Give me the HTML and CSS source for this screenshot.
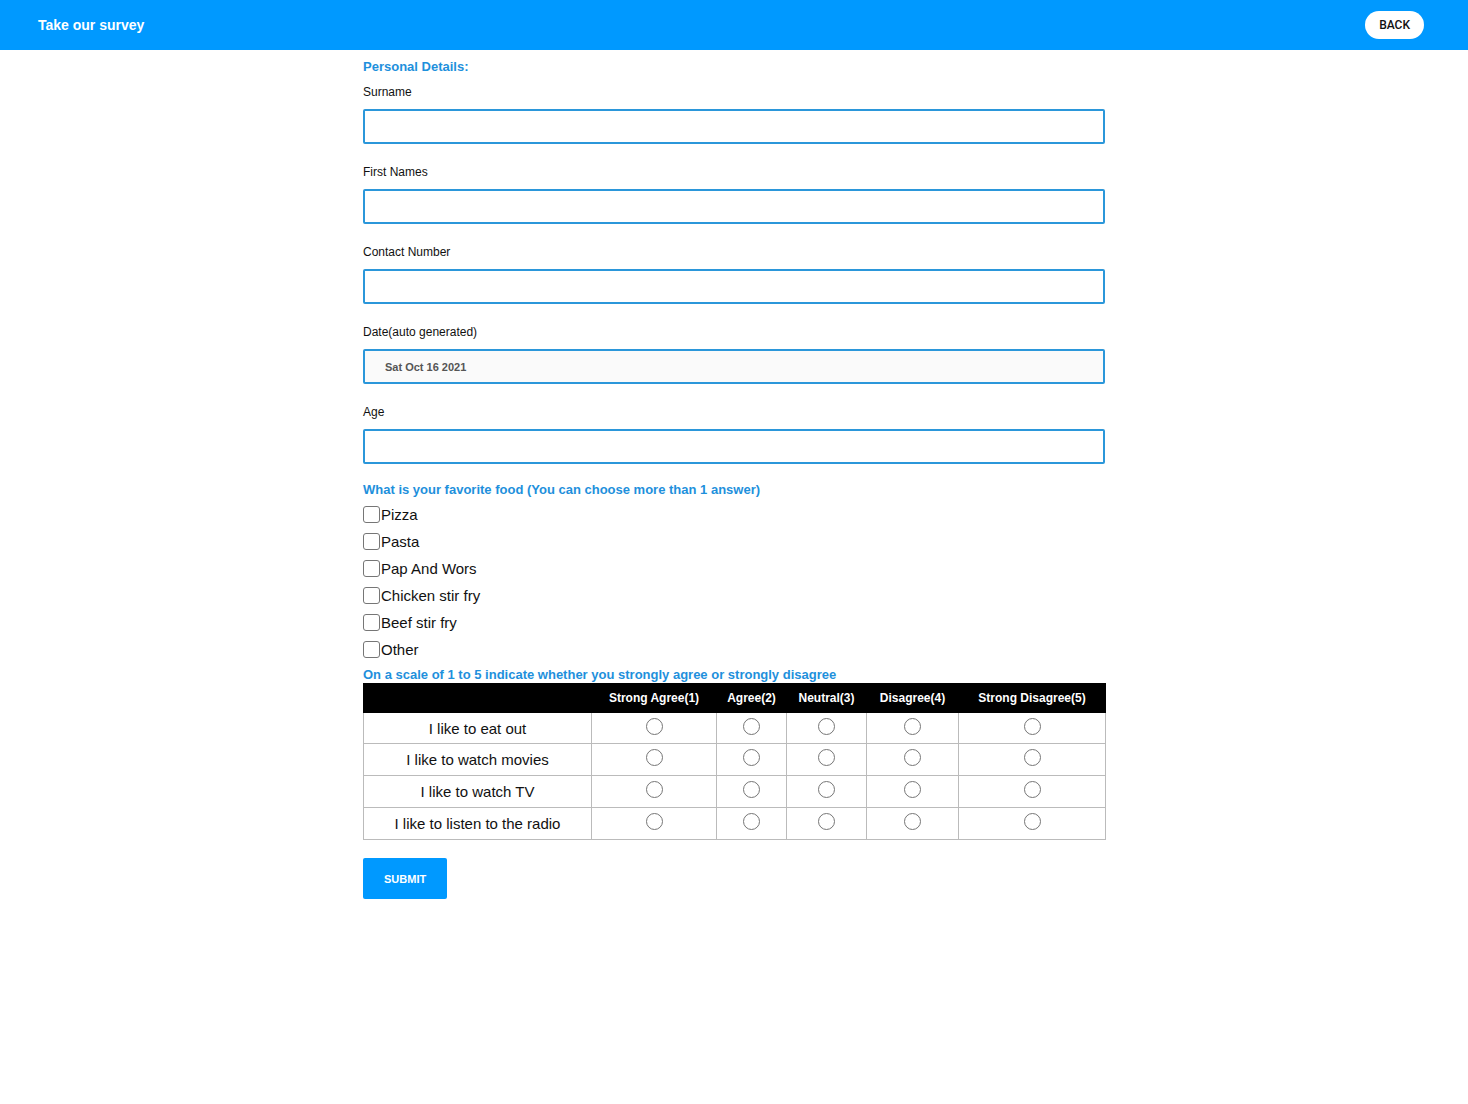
FILE: index.html
```html
<!DOCTYPE html>
<html lang="en">
<head>
<meta charset="utf-8">
<meta name="viewport" content="width=device-width, initial-scale=1">
<title>Take our survey</title>
<link rel="stylesheet" href="styles.css">
</head>
<body>
<header class="topbar">
  <h1 class="topbar-title">Take our survey</h1>
  <button class="back" type="button">BACK</button>
</header>
<main>
<form class="survey">
  <h2 class="heading">Personal Details:</h2>
  <div class="fields">
    <div class="field"><label for="surname">Surname</label><input class="text" id="surname" type="text"></div>
    <div class="field"><label for="names">First Names</label><input class="text" id="names" type="text"></div>
    <div class="field"><label for="contact">Contact Number</label><input class="text" id="contact" type="tel"></div>
    <div class="field"><label for="date">Date(auto generated)</label><input class="text" id="date" type="text" value="Sat Oct 16 2021" disabled></div>
    <div class="field"><label for="age">Age</label><input class="text" id="age" type="text"></div>
  </div>
  <h2 class="heading">What is your favorite food (You can choose more than 1 answer)</h2>
  <div class="options">
    <label class="option"><input class="mark" type="checkbox" name="food" value="pizza">Pizza</label>
    <label class="option"><input class="mark" type="checkbox" name="food" value="pasta">Pasta</label>
    <label class="option"><input class="mark" type="checkbox" name="food" value="pap">Pap And Wors</label>
    <label class="option"><input class="mark" type="checkbox" name="food" value="chicken">Chicken stir fry</label>
    <label class="option"><input class="mark" type="checkbox" name="food" value="beef">Beef stir fry</label>
    <label class="option"><input class="mark" type="checkbox" name="food" value="other">Other</label>
  </div>
  <h2 class="heading" id="scale">On a scale of 1 to 5 indicate whether you strongly agree or strongly disagree</h2>
  <table class="ratings" aria-labelledby="scale">
    <colgroup><col class="c-topic"><col class="c-1"><col class="c-2"><col class="c-3"><col class="c-4"><col class="c-5"></colgroup>
    <thead>
      <tr><td></td><th scope="col">Strong Agree(1)</th><th scope="col">Agree(2)</th><th scope="col">Neutral(3)</th><th scope="col">Disagree(4)</th><th scope="col">Strong Disagree(5)</th></tr>
    </thead>
    <tbody>
      <tr><th scope="row">I like to eat out</th>
        <td><input class="mark round" type="radio" name="eat" value="1" aria-label="Eat out: strong agree"></td>
        <td><input class="mark round" type="radio" name="eat" value="2" aria-label="Eat out: agree"></td>
        <td><input class="mark round" type="radio" name="eat" value="3" aria-label="Eat out: neutral"></td>
        <td><input class="mark round" type="radio" name="eat" value="4" aria-label="Eat out: disagree"></td>
        <td><input class="mark round" type="radio" name="eat" value="5" aria-label="Eat out: strong disagree"></td></tr>
      <tr><th scope="row">I like to watch movies</th>
        <td><input class="mark round" type="radio" name="movies" value="1" aria-label="Movies: strong agree"></td>
        <td><input class="mark round" type="radio" name="movies" value="2" aria-label="Movies: agree"></td>
        <td><input class="mark round" type="radio" name="movies" value="3" aria-label="Movies: neutral"></td>
        <td><input class="mark round" type="radio" name="movies" value="4" aria-label="Movies: disagree"></td>
        <td><input class="mark round" type="radio" name="movies" value="5" aria-label="Movies: strong disagree"></td></tr>
      <tr><th scope="row">I like to watch TV</th>
        <td><input class="mark round" type="radio" name="tv" value="1" aria-label="TV: strong agree"></td>
        <td><input class="mark round" type="radio" name="tv" value="2" aria-label="TV: agree"></td>
        <td><input class="mark round" type="radio" name="tv" value="3" aria-label="TV: neutral"></td>
        <td><input class="mark round" type="radio" name="tv" value="4" aria-label="TV: disagree"></td>
        <td><input class="mark round" type="radio" name="tv" value="5" aria-label="TV: strong disagree"></td></tr>
      <tr><th scope="row">I like to listen to the radio</th>
        <td><input class="mark round" type="radio" name="radio" value="1" aria-label="Radio: strong agree"></td>
        <td><input class="mark round" type="radio" name="radio" value="2" aria-label="Radio: agree"></td>
        <td><input class="mark round" type="radio" name="radio" value="3" aria-label="Radio: neutral"></td>
        <td><input class="mark round" type="radio" name="radio" value="4" aria-label="Radio: disagree"></td>
        <td><input class="mark round" type="radio" name="radio" value="5" aria-label="Radio: strong disagree"></td></tr>
    </tbody>
  </table>
  <button class="submit" type="submit">SUBMIT</button>
</form>
</main>
</body>
</html>
```
FILE: styles.css
```css
*, *::before, *::after { box-sizing: border-box; }

body {
  margin: 0;
  background: #fff;
  color: #111;
  font-family: "Liberation Sans", Arial, sans-serif;
  font-size: 15px;
}

input, button { font-family: inherit; }

.topbar {
  display: flex;
  align-items: center;
  justify-content: space-between;
  min-height: 50px;
  padding: 0 44px 0 38px;
  background: #09f;
}

.topbar-title {
  margin: 0;
  color: #fff;
  font-size: 14px;
  line-height: 20px;
}

.back {
  height: 28px;
  padding: 0 14px;
  border: 0;
  border-radius: 14px;
  background: #fff;
  color: #111;
  font-family: Roboto, "Liberation Sans", sans-serif;
  font-size: 12px;
  font-weight: 500;
}

.survey {
  max-width: 742px;
  margin: 0 auto;
  padding: 9px 0 24px;
}

.heading {
  margin: 0;
  color: #1e90dc;
  font-size: 13px;
  line-height: 16px;
}

.fields {
  display: grid;
  gap: 18px;
  padding: 7px 0 18px;
}

.field {
  display: grid;
  gap: 7px;
  font-size: 12px;
  line-height: 20px;
}

.text {
  width: 100%;
  height: 35px;
  padding: 0 20px;
  border: 2px solid #2b97da;
  border-radius: 2px;
  background: #fff;
  font-size: 12px;
}

.text:disabled {
  background: #fafafa;
  color: #555;
  font-size: 11px;
  font-weight: bold;
}

.options { padding: 3px 0 4px; }

.option {
  display: flex;
  align-items: center;
  gap: 1px;
  height: 27px;
}

.mark {
  appearance: none;
  width: 17px;
  height: 17px;
  margin: 0;
  border: 1px solid #767676;
  border-radius: 3px;
  background: #fff;
}

.mark:checked { background: #09f; }

.round { border-radius: 50%; vertical-align: top; }

.ratings {
  width: 100%;
  table-layout: fixed;
  border-collapse: collapse;
  text-align: center;
}

.c-topic { width: 228px; }
.c-1 { width: 125px; }
.c-2 { width: 70px; }
.c-3 { width: 80px; }
.c-4 { width: 92px; }
.c-5 { width: 147px; }

.ratings thead { background: #000; color: #fff; font-size: 12px; }
.ratings th, .ratings td { padding: 0; }
.ratings thead th, .ratings thead td { height: 29px; border: 1px solid #000; }
.ratings tbody th, .ratings tbody td { border: 1px solid #bbb; }
.ratings tbody tr { height: 32px; }
.ratings tbody tr:first-child { height: 31px; }
.ratings tbody th { font-weight: normal; }
.ratings tbody td { padding-top: 5px; vertical-align: top; }

.submit {
  margin-top: 18px;
  padding: 0 21px;
  height: 41px;
  border: 0;
  border-radius: 2px;
  background: #09f;
  color: #fff;
  font-size: 11px;
  font-weight: bold;
}
```
